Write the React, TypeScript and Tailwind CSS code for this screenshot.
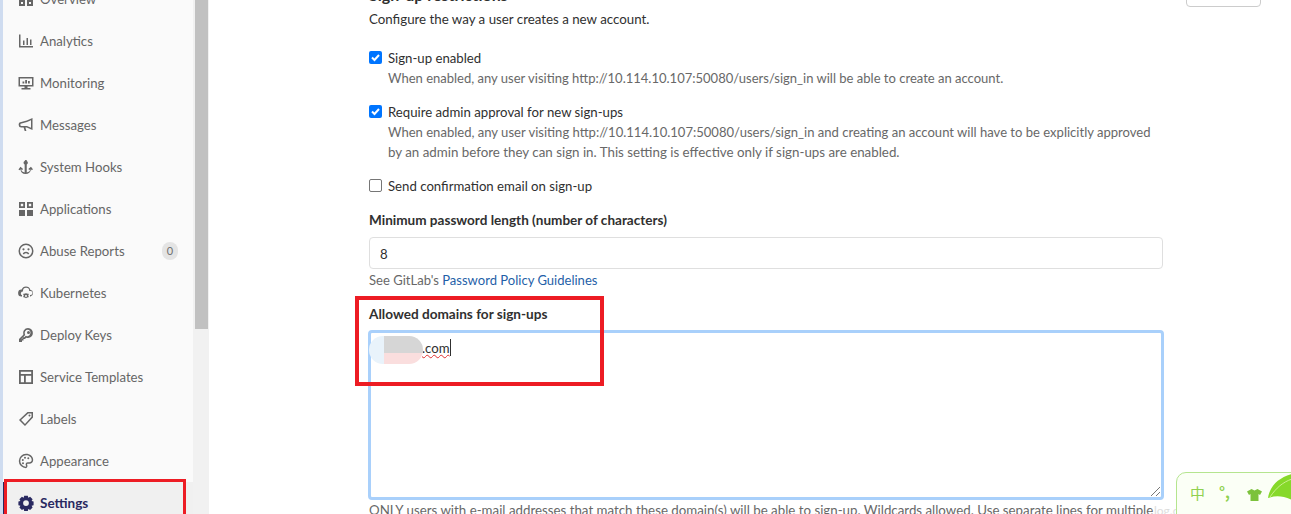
import React from "react";

const P = ({ d, s = 16 }: { d: string; s?: number }) => (
  <svg width={s} height={s} viewBox="0 0 16 16" fill="currentColor" fillRule="evenodd" className="shrink-0">
    <path d={d} />
  </svg>
);

const icons: Record<string, React.ReactNode> = {
  overview: <P d="M1 1h6v6H1zM9 1h6v2H9zM9 5h6v2H9zM1 9h6v6H1zM9 9h6v6H9zM3 3v2h2V3zM3 11v2h2v-2zM11 11v2h2v-2z" />,
  analytics: <P d="M1 1.500h1.500V13H15v1.500H1zM5 7.500h1.500V12H5zM8.500 5H10v7H8.500zM12 6.500h1.500V12H12z" />,
  monitoring: <P d="M.5 2h15v9.500h-6V13h3v1.500h-9V13h3v-1.500h-6zM2 3.500v6.500h12V3.500zM4.500 6.500h1.800v2H4.500zM7.200 5h1.800v3.500H7.200zM10 6h1.800v2.500H10z" />,
  messages: <P d="M14.500 1v12L8.800 10.600H7.400l1 3.400H6.700L5.600 10.500H3.500a2.700 2.700 0 0 1-.3-5.400L8.800 3.400zM13 3.300 9 5.100 3.500 6.600a1.200 1.200 0 0 0 0 2.400H9l4 1.700z" />,
  hooks: <P d="M7.250 1h1.500v.9a2 2 0 0 1 0 3.600v7.900c1.900-.3 3.300-1.400 3.500-3.200l-1 .8-.9-1 2.600-2.300 2 2.600-1.100.9-.9-1c-.2 2.900-2.400 4.800-5.450 4.800S2.650 13.200 2.450 10.300l-.9 1-1.100-.9 2-2.600 2.600 2.300-.9 1-1-.8c.2 1.800 1.600 2.900 3.500 3.200V5.500a2 2 0 0 1 0-3.600z" />,
  apps: <P d="M1 1h6v6H1zM9 1h6v6H9zM1 9h6v6H1zM9 9h6v6H9zM2.800 2.800v2.400h2.400V2.800zM10.800 2.800v2.400h2.400V2.800z" />,
  abuse: <P d="M8 .5a7.500 7.500 0 1 1 0 15 7.500 7.500 0 0 1 0-15zM8 2a6 6 0 1 0 0 12A6 6 0 0 0 8 2zM5.500 5.200a1.100 1.100 0 1 1 0 2.200 1.100 1.100 0 0 1 0-2.200zM10.500 5.200a1.100 1.100 0 1 1 0 2.200 1.100 1.100 0 0 1 0-2.200zM8 8.800c1.500 0 2.800.8 3.300 2l-1.300.6c-.4-.8-1.100-1.200-2-1.200s-1.600.4-2 1.200l-1.300-.6c.5-1.200 1.800-2 3.300-2z" />,
  kube: <P d="M8 1.500a4.500 4.500 0 0 1 4.300 3.200A3.500 3.500 0 0 1 12.500 11.500H12V10h.5a2 2 0 0 0 0-4h-1.300A3 3 0 0 0 5 5.800l-.1.700A2 2 0 0 0 3.500 10H4v1.500h-.5A3.500 3.500 0 0 1 3.700 4.500 4.500 4.500 0 0 1 8 1.500zM8 8l1 .7 1.200-.2.600 1-.6 1 .6 1.100-.6 1-1.200-.2-1 .9-1-.9-1.200.2-.6-1 .6-1.100-.6-1 .6-1 1.200.2zM8 10a1 1 0 1 0 0 2 1 1 0 0 0 0-2z" />,
  key: <P d="M10 1a5 5 0 1 1-1.800 9.700L7 12H5.500v1.500H4V15H1v-3l4.300-4.300A5 5 0 0 1 10 1zM10 2.800A3.200 3.200 0 0 0 7 7.400l.2.500-4.400 4.800v.5h.2v-1.500h1.500V10.200H6.300l1.500-1.400.5.200A3.200 3.200 0 1 0 10 2.800zM10.500 4a1.500 1.500 0 1 1 0 3 1.500 1.500 0 0 1 0-3z" />,
  template: <P d="M1 1h14v14H1zM2.800 2.800V5h10.400V2.800zM2.800 6.800v6.400H6V6.800zM7.800 6.800v6.400h5.400V6.800z" />,
  labels: <P d="M9.500 1H15v5.500L7 15 1 9zM10.200 2.500 3.100 9l3.900 3.900 6.500-7.100V2.500zM11.500 3.500a1 1 0 1 1 0 2 1 1 0 0 1 0-2z" />,
  appearance: <P d="M8 .8c4 0 7.200 2.700 7.200 6.200 0 2.200-1.700 3.700-3.800 3.700H9.800c-.6 0-.9.600-.6 1.100.6 1 .2 2.900-1.200 3.400A7.200 7.200 0 0 1 8 .8zM8 2.300a5.700 5.700 0 0 0 0 11.400c.2-.2.200-.7-.1-1.200-.8-1.500.2-3.300 1.900-3.300h1.600c1.300 0 2.300-.9 2.300-2.200 0-2.600-2.500-4.700-5.700-4.700zM4.800 6a1 1 0 1 1 0 2 1 1 0 0 1 0-2zM7 3.800a1 1 0 1 1 0 2 1 1 0 0 1 0-2zM10.300 4.300a1 1 0 1 1 0 2 1 1 0 0 1 0-2zM5 9.300a1 1 0 1 1 0 2 1 1 0 0 1 0-2z" />,
  settings: <P d="M6.200.8h3.600l.5 2 1.800-1 2.500 2.500-1 1.800 2 .5v3.600l-2 .5 1 1.800-2.500 2.500-1.800-1-.5 2H6.200l-.5-2-1.800 1-2.500-2.500 1-1.800-2-.5V6.600l2-.5-1-1.800 2.500-2.500 1.800 1zM8 5.200a2.900 2.900 0 1 0 0 5.800 2.900 2.900 0 0 0 0-5.800z" />,
};

const nav: [string, string][] = [
  ["overview", "Overview"],
  ["analytics", "Analytics"],
  ["monitoring", "Monitoring"],
  ["messages", "Messages"],
  ["hooks", "System Hooks"],
  ["apps", "Applications"],
  ["abuse", "Abuse Reports"],
  ["kube", "Kubernetes"],
  ["key", "Deploy Keys"],
  ["template", "Service Templates"],
  ["labels", "Labels"],
  ["appearance", "Appearance"],
];

const Check = ({ on }: { on?: boolean }) =>
  on ? (
    <span className="mt-[3px] flex h-[13px] w-[13px] shrink-0 items-center justify-center rounded-[2px] bg-[#0075ff]">
      <svg width="11" height="11" viewBox="0 0 11 11" fill="none" stroke="#fff" strokeWidth="2">
        <path d="M2 5.500 4.500 8 9 3" />
      </svg>
    </span>
  ) : (
    <span className="mt-[3px] h-[13px] w-[13px] shrink-0 rounded-[2px] border border-[#767676] bg-white" />
  );

export default function App() {
  return (
    <div className="relative flex h-[514px] w-[1291px] overflow-hidden bg-white font-['Lato',sans-serif] text-[13.2px] leading-[20px] text-[#303030]">
      <aside className="flex h-[514px] w-[209px] shrink-0 overflow-hidden">
        <div className="w-[3px] shrink-0 bg-[#cfdcf0]" />
        <div className="w-[190px] shrink-0 bg-[#fafafa]">
          <div className="-mt-[22px] flex flex-col">
            {nav.map(([k, label]) => (
              <div key={k} className="flex h-[42px] items-center gap-[6px] pl-[15px] text-[#666666]">
                {icons[k]}
                <span>{label}</span>
                {k === "abuse" && (
                  <span className="ml-auto mr-[15px] flex h-[18px] w-[16px] items-center justify-center rounded-full bg-[#e4e4e4] text-[11px] text-[#707070]">
                    0
                  </span>
                )}
              </div>
            ))}
            <div className="flex h-[42px] items-center gap-[6px] border-l border-[#292961] bg-[#f0f0f0] pl-[14px] text-[13.5px] font-bold text-[#292961]">
              {icons.settings}
              <span>Settings</span>
            </div>
          </div>
        </div>
        <div className="w-[16px] shrink-0 bg-[#f1f1f1] px-[2px]">
          <div className="h-[329px] w-[13px] bg-[#c1c1c1]" />
        </div>
      </aside>

      <main className="ml-[160px] w-[794px] shrink-0">
        <div className="-mt-[15px] h-[24px] text-[16px] font-bold leading-[20px]">Sign-up restrictions</div>
        <p className="text-[13.3px]">Configure the way a user creates a new account.</p>

        <div className="mt-[19px] flex gap-[6px]">
          <Check on />
          <div>
            <div>Sign-up enabled</div>
            <div className="text-[13.03px] text-[#686868]">When enabled, any user visiting http://10.114.10.107:50080/users/sign_in will be able to create an account.</div>
          </div>
        </div>

        <div className="mt-[14px] flex gap-[6px]">
          <Check on />
          <div>
            <div>Require admin approval for new sign-ups</div>
            <div className="text-[13.05px] text-[#686868]">
              When enabled, any user visiting http://10.114.10.107:50080/users/sign_in and creating an account will have to be explicitly approved
              <br />
              <span className="text-[13.33px]">by an admin before they can sign in. This setting is effective only if sign-ups are enabled.</span>
            </div>
          </div>
        </div>

        <div className="mt-[14px] flex gap-[6px]">
          <Check />
          <div>Send confirmation email on sign-up</div>
        </div>

        <div className="mt-[14px] text-[13.55px] font-bold">Minimum password length (number of characters)</div>
        <div className="mt-[7px] flex h-[32px] items-center rounded-[4px] border border-[#dfdfdf] bg-white px-[10px] pt-px">8</div>
        <div className="mt-[1px] text-[13.05px] text-[#686868]">
          See GitLab's <span className="text-[#1f5fa8]">Password Policy Guidelines</span>
        </div>

        <div className="mt-[14px] text-[13.6px] font-bold">Allowed domains for sign-ups</div>
        <div className="relative -mx-px mt-[6px] h-[170px] rounded-[4px] border-[3px] border-[#a9d0fb] bg-white pl-[51px] pt-[3px]">
          <span className="relative underline decoration-wavy decoration-[#e03030] decoration-1">.com</span>
          <span className="inline-block h-[17px] w-px translate-y-[3px] bg-[#303030]" />
          <svg width="12" height="12" viewBox="0 0 12 12" className="absolute bottom-0 right-0" stroke="#777" fill="none">
            <path d="M2 11 11 2M7 11l4-4" />
          </svg>
          {/* redaction smudge */}
          <div className="absolute -left-[2px] top-[3px] flex h-[28px] w-[54px] overflow-hidden rounded-full blur-[0.5px]">
            <div className="w-[15px] bg-[#e9f3fb]" />
            <div className="flex w-[39px] flex-col">
              <div className="h-[17px] bg-[#d6d6d6]" />
              <div className="h-[11px] bg-[#fadede]" />
            </div>
          </div>
        </div>
        <div className="whitespace-nowrap text-[13.3px] text-[#686868]">
          ONLY users with e-mail addresses that match these domain(s) will be able to sign-up. Wildcards allowed. Use separate lines for multiple
        </div>
      </main>

      {/* cut-off button, top right */}
      <div className="absolute -top-[24px] left-[1186px] h-[31px] w-[75px] rounded-[4px] border border-[#cccccc] bg-white" />

      {/* annotation boxes */}
      <div className="absolute left-[355px] top-[296px] h-[90px] w-[249px] border-[4px] border-[#ed1c24]" />
      <div className="absolute left-[4px] top-[479px] h-[45px] w-[182px] border-[3px] border-[#ed1c24]" />

      {/* faint watermark behind the input-method bar */}
      <div className="absolute left-[1154px] top-[501px] text-[12px] text-[#dddddd]">log.c</div>

      {/* input-method bar */}
      <div className="absolute left-[1176px] top-[472px] flex h-[60px] w-[140px] items-start overflow-hidden rounded-[10px] border border-[#b5e58f] bg-[#fbfff6] pl-[13px] pt-[10px] font-['Noto_Sans_CJK_SC',sans-serif] text-[15px] text-[#8fd14f]">
        <span>中</span>
        <span className="ml-[14px] font-bold leading-[18px]">°,</span>
        <svg width="15" height="14" viewBox="0 0 15 14" fill="#7cc23c" className="ml-[17px] mt-[5px]">
          <path d="M4.500 1 7.500 2.500 10.500 1 15 3.500 13 7 11.500 6v7h-8V6L2 7 0 3.500z" />
        </svg>
        <svg width="24" height="27" viewBox="0 0 24 27" className="absolute left-[91px] top-0">
          <path d="M0 25C2 13 10 5 24 1V27C14 22 6 23 0 25z" fill="#86d92a" />
          <path d="M2 24C8 15 15 9 24 6" stroke="#c9f08f" fill="none" />
        </svg>
      </div>
    </div>
  );
}
